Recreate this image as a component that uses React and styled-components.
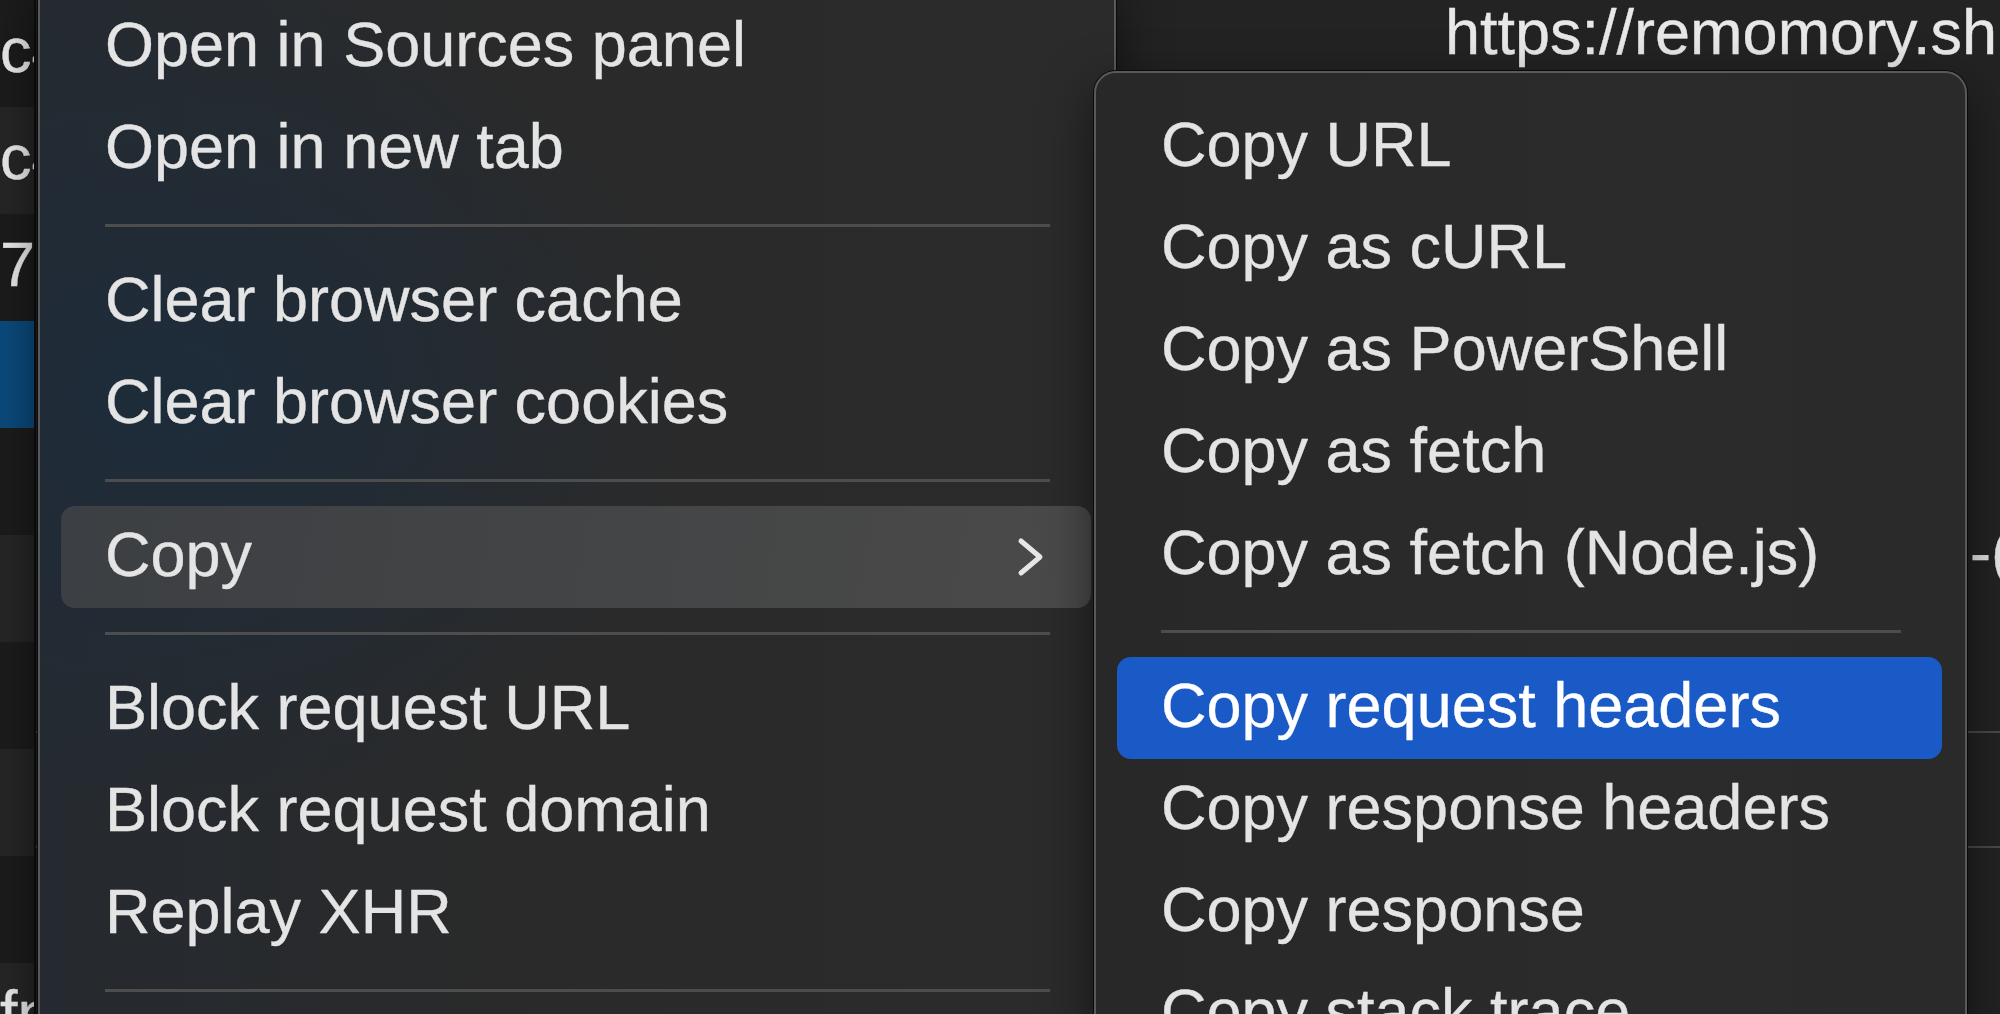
import React from 'react';
import styled, { createGlobalStyle } from 'styled-components';

const GlobalStyle = createGlobalStyle`
  html, body {
    margin: 0;
    padding: 0;
    background: #232323;
  }
  * {
    box-sizing: border-box;
  }
`;

// Background: the network panel under the menus
const Screen = styled.div`
  position: relative;
  width: 2000px;
  height: 1014px;
  overflow: hidden;
  display: flex;
  background: #232323;
  font-family: "Liberation Sans", Arial, sans-serif;
  color: #e6e6e6;
  -webkit-text-stroke: 0.35px currentColor;
`;

const NameColumn = styled.div`
  width: 36px;
  flex: none;
  display: flex;
  flex-direction: column;
  overflow: hidden;
  border-right: 2px solid #0e0e0e;
`;

const NameCell = styled.div`
  height: 107px;
  flex: none;
  font-size: 63px;
  line-height: 100px;
  white-space: nowrap;
  color: #ececec;
  background: ${(p) => (p.$selected ? '#0b4a7c' : p.$odd ? '#262626' : '#1c1c1c')};
`;

const DetailPane = styled.div`
  flex: 1;
  display: flex;
  flex-direction: column;
`;

const DetailRow = styled.div`
  height: ${(p) => p.$height}px;
  flex: none;
  padding-left: ${(p) => p.$indent || 0}px;
  font-size: 63px;
  line-height: ${(p) => p.$height - 6}px;
  white-space: nowrap;
  overflow: hidden;
  color: #e8e8e8;
  border-bottom: ${(p) => (p.$rule ? '2px solid #4a4a4a' : 'none')};
`;

// Context menus
const Menu = styled.div`
  position: absolute;
  left: ${(p) => p.$left}px;
  top: ${(p) => p.$top}px;
  width: ${(p) => p.$width}px;
  padding: ${(p) => p.$padTop}px 23px 0 21px;
  display: flex;
  flex-direction: column;
  border: 2px solid #595959;
  border-radius: 22px;
  box-shadow: 0 0 0 1px #0a0a0a, 0 18px 50px rgba(0, 0, 0, 0.55);
  background: ${(p) => p.$bg};
`;

const Item = styled.div`
  height: 102px;
  flex: none;
  display: flex;
  align-items: center;
  justify-content: space-between;
  padding: 0 45px 6px 44px;
  border-radius: 14px;
  font-size: 63px;
  white-space: nowrap;
  color: ${(p) => (p.$active ? '#ffffff' : '#e4e4e4')};
  background: ${(p) =>
    p.$active
      ? '#1a5ac6'
      : p.$hover
      ? 'linear-gradient(100deg, #3c3f43 0%, #444546 55%, #4a4a4a 100%)'
      : 'transparent'};

  svg {
    margin-top: 6px;
  }
`;

const Separator = styled.div`
  height: 51px;
  flex: none;
  display: flex;
  align-items: center;
  padding: 0 41px 0 44px;

  &::after {
    content: '';
    flex: 1;
    height: 3px;
    background: #4d4d4d;
  }
`;

const Chevron = () => (
  <svg width="30" height="40" viewBox="0 0 30 40" fill="none">
    <polyline
      points="5,4 24,20 5,36"
      stroke="#e6e6e6"
      strokeWidth="5"
      strokeLinecap="round"
      strokeLinejoin="round"
    />
  </svg>
);

const names = ['c4', 'c4', '7f', '', '', '', '', '', '', 'fn'];

const mainMenu = [
  'Open in Sources panel',
  'Open in new tab',
  '-',
  'Clear browser cache',
  'Clear browser cookies',
  '-',
  'Copy',
  '-',
  'Block request URL',
  'Block request domain',
  'Replay XHR',
  '-',
  'Save all as HAR with content',
];

const copyMenu = [
  'Copy URL',
  'Copy as cURL',
  'Copy as PowerShell',
  'Copy as fetch',
  'Copy as fetch (Node.js)',
  '-',
  'Copy request headers',
  'Copy response headers',
  'Copy response',
  'Copy stack trace',
];

const App = () => {
  return (
    <>
      <GlobalStyle />
      <Screen>
        <NameColumn>
          {names.map((n, i) => (
            <NameCell key={i} $odd={i % 2 === 1} $selected={i === 3}>
              {n}
            </NameCell>
          ))}
        </NameColumn>
        <DetailPane>
          <DetailRow $height={70} $indent={1409}>
            https://remomory.sh
          </DetailRow>
          <DetailRow $height={450} />
          <DetailRow $height={70} $indent={1934}>
            -(
          </DetailRow>
          <DetailRow $height={143} $rule />
          <DetailRow $height={115} $rule />
        </DetailPane>

        <Menu
          $left={38}
          $top={-30}
          $width={1078}
          $padTop={24}
          $bg="radial-gradient(ellipse 520px 420px at 140px 420px, rgba(28, 44, 60, 0.85), rgba(28, 44, 60, 0) 100%), linear-gradient(90deg, #252a30 0%, #2a2a2a 45%, #2b2b2b 100%)"
        >
          {mainMenu.map((label, i) =>
            label === '-' ? (
              <Separator key={i} />
            ) : (
              <Item key={i} $hover={label === 'Copy'}>
                <span>{label}</span>
                {label === 'Copy' && <Chevron />}
              </Item>
            )
          )}
        </Menu>

        <Menu
          $left={1094}
          $top={71}
          $width={873}
          $padTop={23}
          $bg="linear-gradient(90deg, #282828 0%, #2b2b2b 60%, #2a2a2a 100%)"
        >
          {copyMenu.map((label, i) =>
            label === '-' ? (
              <Separator key={i} />
            ) : (
              <Item key={i} $active={label === 'Copy request headers'}>
                <span>{label}</span>
              </Item>
            )
          )}
        </Menu>
      </Screen>
    </>
  );
};

export default App;
